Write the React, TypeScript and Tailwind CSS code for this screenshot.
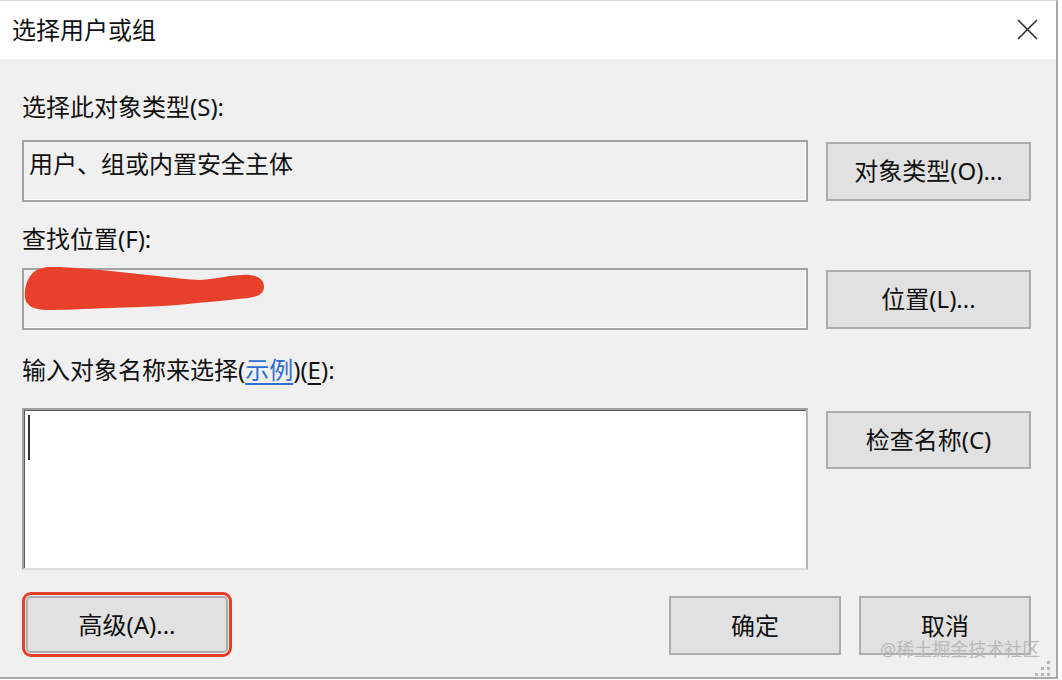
import type { ReactNode } from "react";

const Btn = ({ children, className = "" }: { children: ReactNode; className?: string }) => (
  <button
    className={`flex items-center justify-center bg-[#e1e1e1] border-2 border-[#adadad] leading-[30px] text-[24px] text-[#111] ${className}`}
  >
    {children}
  </button>
);

export default function App() {
  return (
    <div className="w-[1062px] h-[680px] bg-white font-['Noto_Sans','Noto_Sans_CJK_SC',sans-serif] text-[24px] text-[#111]">
      <div className="relative flex flex-col w-[1058px] h-[679px] border-t border-t-[#d6d6d6] border-r-2 border-b-2 border-r-[#a8a8a8] border-b-[#a8a8a8] bg-[#f0f0f0]">
        {/* Title bar */}
        <div className="flex items-center justify-between h-[58px] bg-white pl-[12px] pr-[17px]">
          <span className="leading-[30px]">选择用户或组</span>
          <svg width="21" height="21" viewBox="0 0 21 21" className="mr-[1px] -mt-[1px]">
            <path d="M1 1L20 20M20 1L1 20" stroke="#2b2b2b" strokeWidth="1.6" fill="none" />
          </svg>
        </div>

        {/* Body */}
        <div className="flex flex-col pl-[22px]">
          <div className="mt-[33px] leading-[30px]">选择此对象类型(S):</div>
          <div className="mt-[18px] flex items-center gap-[18px]">
            <div className="w-[786px] h-[62px] border-2 border-[#a3a3a3] shadow-[inset_-1px_-1px_0_#ffffff] pl-[5px] pt-[7px] leading-[30px]">
              用户、组或内置安全主体
            </div>
            <Btn className="w-[205px] h-[59px]">对象类型(O)...</Btn>
          </div>

          <div className="mt-[22px] leading-[30px]">查找位置(F):</div>
          <div className="mt-[14px] flex items-center gap-[18px]">
            <div className="relative w-[786px] h-[62px] border-2 border-[#a3a3a3] shadow-[inset_-1px_-1px_0_#ffffff]">
              <span className="absolute left-[9px] top-[12px] w-[3px] h-[3px] rounded-full bg-[#555]" />
              <svg
                width="250"
                height="48"
                viewBox="0 0 250 48"
                className="absolute left-[-2px] top-[-3px]"
              >
                <path
                  d="M13 4 C20 0 30 -1 38 0 C60 1 80 3 98 5 C130 8 155 12 178 13 C195 12 208 8 220 8 C233 7 242 11 242 20 C242 27 235 30 226 31 C205 33 190 35 175 36 C150 39 120 40 90 41 C60 42 40 43 25 43 C11 43 4 38 3 31 C2 22 5 10 13 4 Z"
                  fill="#e8402b"
                />
              </svg>
            </div>
            <Btn className="w-[205px] h-[59px]">位置(L)...</Btn>
          </div>

          <div className="mt-[25px] leading-[30px]">
            输入对象名称来选择(<span className="text-[#2f6fd1] underline underline-offset-4">示例</span>)(<span className="underline underline-offset-4">E</span>):
          </div>
          <div className="mt-[23px] flex items-start gap-[18px]">
            <div className="w-[786px] h-[162px] bg-white border-2 border-[#a0a0a0] border-b-[#dcdcdc] border-r-[#b5b5b5] shadow-[inset_1px_1px_0_#5a5a5a] pl-[4px] pt-[5px]">
              <div className="w-[2px] h-[45px] bg-[#333]" />
            </div>
            <Btn className="mt-[3px] w-[205px] h-[58px]">检查名称(C)</Btn>
          </div>

          {/* Bottom buttons */}
          <div className="mt-[22px] flex items-start">
            <div className="w-[210px] h-[65px] border-[3px] border-[#e63e29] rounded-[9px] p-[1px]">
              <Btn className="w-full h-full rounded-[5px]">高级(A)...</Btn>
            </div>
            <div className="ml-auto mr-[25px] mt-[4px] flex gap-[18px]">
              <Btn className="w-[172px] h-[59px]">确定</Btn>
              <Btn className="w-[172px] h-[59px]">取消</Btn>
            </div>
          </div>
        </div>

        {/* Watermark */}
        <div className="absolute left-[880px] top-[636px] text-[18px] leading-[24px] text-[#b9b9b9]">
          @稀土掘金技术社区
        </div>

        {/* Resize grip */}
        <svg width="18" height="18" viewBox="0 0 18 18" className="absolute left-[1034px] top-[658px]">
          <rect x="13" y="2" width="3" height="3" fill="#b8b8b8" />
          <rect x="7" y="8" width="3" height="3" fill="#b8b8b8" />
          <rect x="13" y="8" width="3" height="3" fill="#b8b8b8" />
          <rect x="1" y="14" width="3" height="3" fill="#b8b8b8" />
          <rect x="7" y="14" width="3" height="3" fill="#b8b8b8" />
          <rect x="13" y="14" width="3" height="3" fill="#b8b8b8" />
        </svg>
      </div>
    </div>
  );
}
